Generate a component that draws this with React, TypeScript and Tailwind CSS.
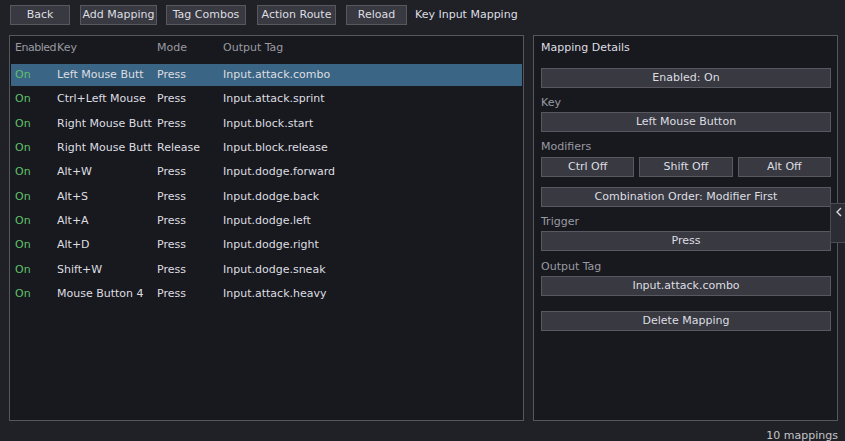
import React from "react";

type Mapping = { enabled: boolean; key: string; mode: string; tag: string };

const mappings: Mapping[] = [
  { enabled: true, key: "Left Mouse Butt", mode: "Press", tag: "Input.attack.combo" },
  { enabled: true, key: "Ctrl+Left Mouse", mode: "Press", tag: "Input.attack.sprint" },
  { enabled: true, key: "Right Mouse Butt", mode: "Press", tag: "Input.block.start" },
  { enabled: true, key: "Right Mouse Butt", mode: "Release", tag: "Input.block.release" },
  { enabled: true, key: "Alt+W", mode: "Press", tag: "Input.dodge.forward" },
  { enabled: true, key: "Alt+S", mode: "Press", tag: "Input.dodge.back" },
  { enabled: true, key: "Alt+A", mode: "Press", tag: "Input.dodge.left" },
  { enabled: true, key: "Alt+D", mode: "Press", tag: "Input.dodge.right" },
  { enabled: true, key: "Shift+W", mode: "Press", tag: "Input.dodge.sneak" },
  { enabled: true, key: "Mouse Button 4", mode: "Press", tag: "Input.attack.heavy" },
];

const btn =
  "h-[20px] flex items-center justify-center bg-[#383941] border border-[#575860] text-[#dedee2] whitespace-nowrap";

const Label: React.FC<{ children: React.ReactNode }> = ({ children }) => (
  <div className="h-[14px] leading-[14px] text-[#9a9aa2]">{children}</div>
);

const App: React.FC = () => {
  const selected = 0;

  return (
    <div
      className="w-[845px] h-[441px] bg-[#202127] text-[11px] relative overflow-hidden"
      style={{ fontFamily: '"DejaVu Sans", "Liberation Sans", sans-serif' }}
    >
      {/* Top bar */}
      <div className="flex items-center pt-[5px] pl-[10px] h-[25px]">
        <div className={`${btn} w-[60px]`}>Back</div>
        <div className={`${btn} w-[77px] ml-[10px]`}>Add Mapping</div>
        <div className={`${btn} w-[80px] ml-[9px]`}>Tag Combos</div>
        <div className={`${btn} w-[79px] ml-[11px]`}>Action Route</div>
        <div className={`${btn} w-[61px] ml-[10px]`}>Reload</div>
        <div className="ml-[8px] text-[#dedee2] whitespace-nowrap">Key Input Mapping</div>
      </div>

      {/* Panels */}
      <div className="flex mt-[10px] pl-[9px] h-[386px]">
        {/* Mapping list */}
        <div className="w-[515px] h-full border border-[#55575e] bg-[#18191e] px-[1px]">
          <div className="flex items-center h-[24px] text-[#9a9aa2] pl-[4px]">
            <div className="w-[42px] whitespace-nowrap tracking-[-0.5px]">Enabled</div>
            <div className="w-[100px]">Key</div>
            <div className="w-[66px]">Mode</div>
            <div>Output Tag</div>
          </div>
          <div className="flex flex-col gap-[2.4px] mt-[4px]">
            {mappings.map((m, i) => (
              <div
                key={i}
                className={`flex items-center h-[22px] pl-[4px] whitespace-nowrap ${
                  i === selected ? "bg-[#3a6584]" : ""
                }`}
              >
                <div className="w-[42px] text-[#5fc06d]">{m.enabled ? "On" : "Off"}</div>
                <div className="w-[100px] overflow-hidden text-[#dedee2]">{m.key}</div>
                <div className="w-[66px] text-[#dedee2]">{m.mode}</div>
                <div className="text-[#dedee2]">{m.tag}</div>
              </div>
            ))}
          </div>
        </div>

        {/* Details */}
        <div className="w-[305px] h-full ml-[9px] border border-[#55575e] bg-[#18191e] pl-[7px] pr-[6px] pt-[5px] flex flex-col">
          <div className="h-[14px] leading-[14px] text-[#dedee2]">Mapping Details</div>
          <div className={`${btn} mt-[13px]`}>Enabled: On</div>
          <div className="mt-[8px]">
            <Label>Key</Label>
          </div>
          <div className={`${btn} mt-[2px]`}>Left Mouse Button</div>
          <div className="mt-[8px]">
            <Label>Modifiers</Label>
          </div>
          <div className="grid grid-cols-3 gap-[5px] mt-[3px]">
            <div className={btn}>Ctrl Off</div>
            <div className={btn}>Shift Off</div>
            <div className={btn}>Alt Off</div>
          </div>
          <div className={`${btn} mt-[10px]`}>Combination Order: Modifier First</div>
          <div className="mt-[8px]">
            <Label>Trigger</Label>
          </div>
          <div className={`${btn} mt-[2px]`}>Press</div>
          <div className="mt-[9px]">
            <Label>Output Tag</Label>
          </div>
          <div className={`${btn} mt-[2px]`}>Input.attack.combo</div>
          <div className={`${btn} mt-[15px]`}>Delete Mapping</div>
        </div>
      </div>

      {/* Footer */}
      <div className="flex justify-end pr-[7px] mt-[7px] text-[#c4c4c8]">10 mappings</div>

      {/* Side tab */}
      <div className="absolute left-[830px] top-[203px] w-[18px] h-[40px] bg-[#2b2c34] border border-[#4a4b53] flex justify-start pl-[4px] pt-[3px]">
        <svg width="8" height="10" viewBox="0 0 8 10" className="text-[#d8d8dc]">
          <path d="M6 1 L2 5 L6 9" stroke="currentColor" strokeWidth="1.4" fill="none" />
        </svg>
      </div>
    </div>
  );
};

export default App;
